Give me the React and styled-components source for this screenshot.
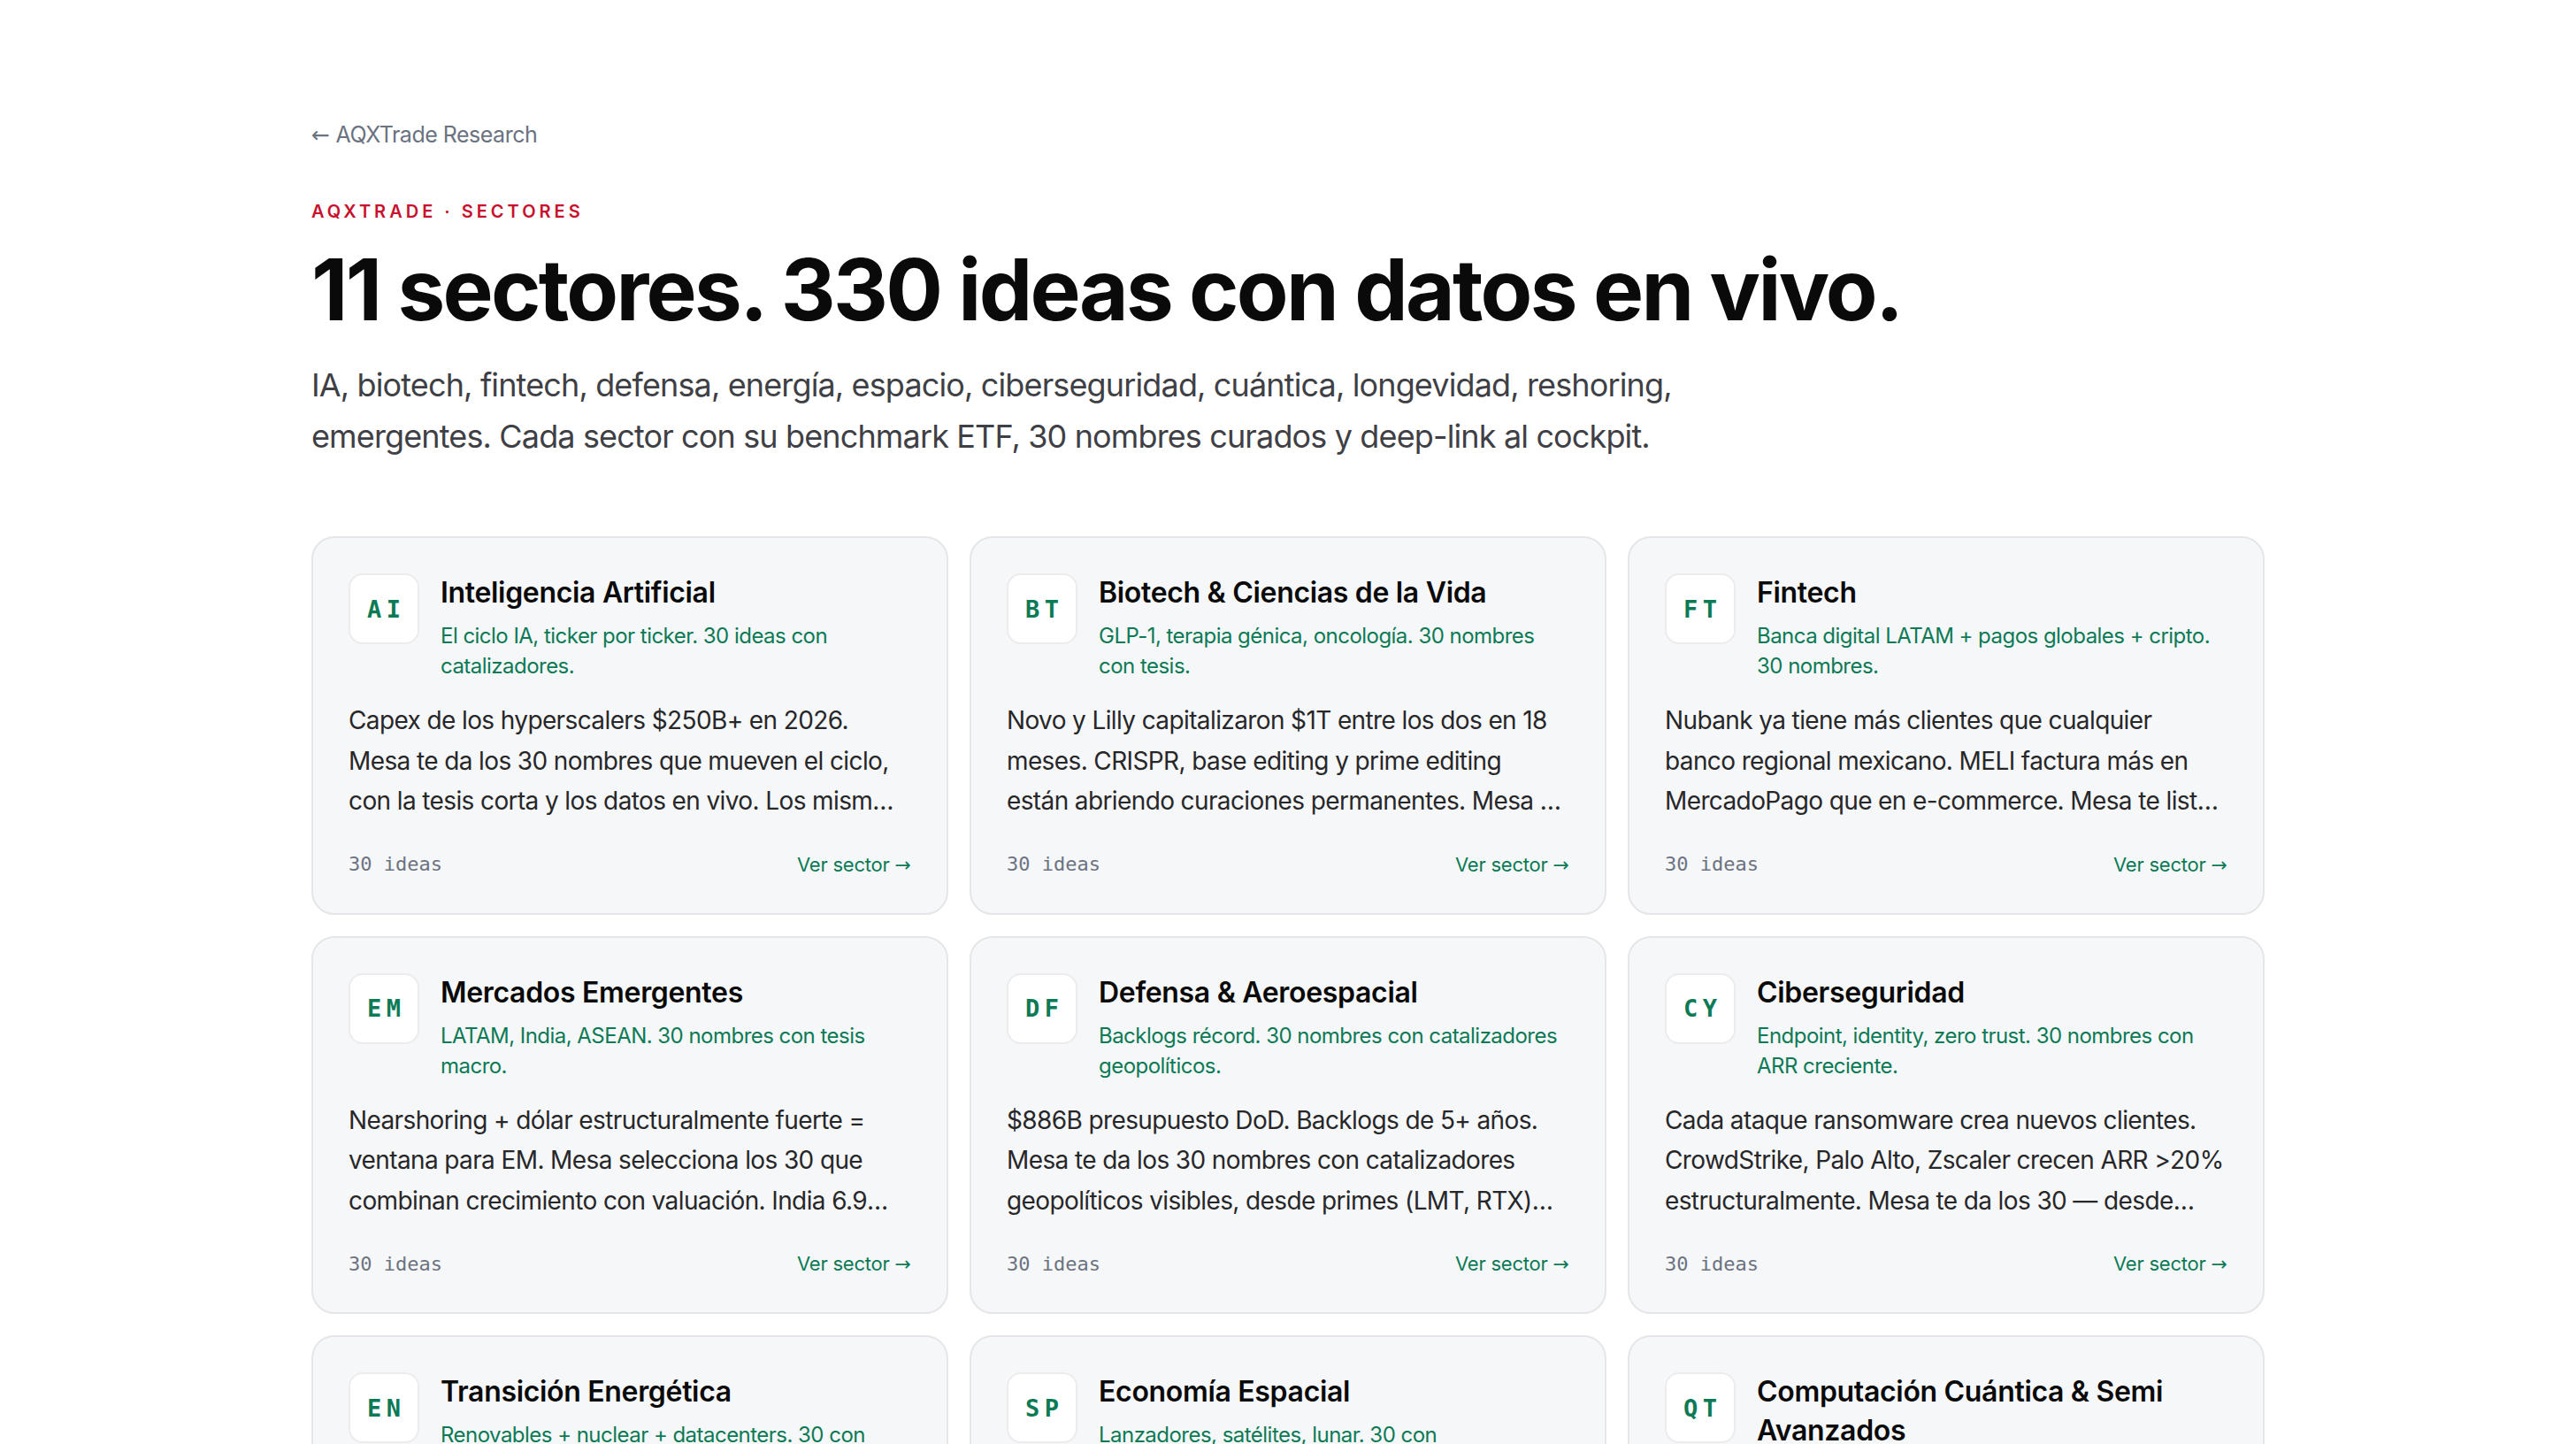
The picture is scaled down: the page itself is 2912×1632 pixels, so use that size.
import React from 'react';
import styled, { createGlobalStyle } from 'styled-components';

const sectors = [
  {
    code: 'AI',
    name: 'Inteligencia Artificial',
    tagline: 'El ciclo IA, ticker por ticker. 30 ideas con catalizadores.',
    thesis:
      'Capex de los hyperscalers $250B+ en 2026. Mesa te da los 30 nombres que mueven el ciclo, con la tesis corta y los datos en vivo. Los mismos que siguen los grandes fondos, sin ruido.',
  },
  {
    code: 'BT',
    name: 'Biotech & Ciencias de la Vida',
    tagline: 'GLP-1, terapia génica, oncología. 30 nombres con tesis.',
    thesis:
      'Novo y Lilly capitalizaron $1T entre los dos en 18 meses. CRISPR, base editing y prime editing están abriendo curaciones permanentes. Mesa te da los 30 nombres con catalizadores clínicos.',
  },
  {
    code: 'FT',
    name: 'Fintech',
    tagline: 'Banca digital LATAM + pagos globales + cripto. 30 nombres.',
    thesis:
      'Nubank ya tiene más clientes que cualquier banco regional mexicano. MELI factura más en MercadoPago que en e-commerce. Mesa te lista los 30 nombres que capturan la migración digital.',
  },
  {
    code: 'EM',
    name: 'Mercados Emergentes',
    tagline: 'LATAM, India, ASEAN. 30 nombres con tesis macro.',
    thesis:
      'Nearshoring + dólar estructuralmente fuerte = ventana para EM. Mesa selecciona los 30 que combinan crecimiento con valuación. India 6.9% de crecimiento, México con récord de inversión extranjera.',
  },
  {
    code: 'DF',
    name: 'Defensa & Aeroespacial',
    tagline: 'Backlogs récord. 30 nombres con catalizadores geopolíticos.',
    thesis:
      '$886B presupuesto DoD. Backlogs de 5+ años. Mesa te da los 30 nombres con catalizadores geopolíticos visibles, desde primes (LMT, RTX) hasta proveedores de drones y munición.',
  },
  {
    code: 'CY',
    name: 'Ciberseguridad',
    tagline: 'Endpoint, identity, zero trust. 30 nombres con ARR creciente.',
    thesis:
      'Cada ataque ransomware crea nuevos clientes. CrowdStrike, Palo Alto, Zscaler crecen ARR >20% estructuralmente. Mesa te da los 30 — desde plataformas consolidadas hasta small caps.',
  },
  {
    code: 'EN',
    name: 'Transición Energética',
    tagline: 'Renovables + nuclear + datacenters. 30 con catalizadores.',
    thesis:
      'La demanda eléctrica de los datacenters se duplica antes de 2030. Nuclear modular, redes y almacenamiento vuelven a ser tesis de crecimiento. Mesa te da los 30 nombres del nuevo ciclo.',
  },
  {
    code: 'SP',
    name: 'Economía Espacial',
    tagline: 'Lanzadores, satélites, lunar. 30 con catalizadores.',
    thesis:
      'El costo por kilo a órbita cayó 90% en una década. Constelaciones, observación terrestre y misiones lunares ya facturan. Mesa te da los 30 nombres que cotizan la nueva carrera espacial.',
  },
  {
    code: 'QT',
    name: 'Computación Cuántica & Semi Avanzados',
    tagline: 'Qubits, litografía, memoria HBM. 30 nombres.',
    thesis:
      'Cada nodo de 2nm exige más litografía EUV y más memoria HBM. La cuántica pasa del laboratorio al primer ingreso recurrente. Mesa te da los 30 nombres de la cadena completa.',
  },
  {
    code: 'LG',
    name: 'Longevidad',
    tagline: 'Senolíticos, diagnóstico, medtech. 30 nombres.',
    thesis:
      'La población mayor de 65 se duplica en 25 años. Diagnóstico temprano, medtech y terapias de envejecimiento capturan ese gasto. Mesa te da los 30 nombres con datos en vivo.',
  },
  {
    code: 'RS',
    name: 'Reshoring',
    tagline: 'Manufactura, automatización, logística. 30 nombres.',
    thesis:
      'CHIPS Act e IRA movieron $400B+ de inversión industrial a Norteamérica. Automatización, construcción y logística capturan el regreso de las fábricas. Mesa te da los 30 nombres.',
  },
];

const GlobalStyle = createGlobalStyle`
  * {
    box-sizing: border-box;
  }

  body {
    margin: 0;
    background: #ffffff;
    font-family: Inter, "Noto Sans", "Liberation Sans", sans-serif;
    color: #0a0a0a;
    -webkit-font-smoothing: antialiased;
  }
`;

const App = () => {
  return (
    <>
      <GlobalStyle />
      <Page>
        <BackLink href="#">
          <Arrow>←</Arrow> AQXTrade Research
        </BackLink>

        <Eyebrow>AQXTrade · Sectores</Eyebrow>
        <Headline>11 sectores. 330 ideas con datos en vivo.</Headline>
        <Lead>
          IA, biotech, fintech, defensa, energía, espacio, ciberseguridad, cuántica,
          longevidad, reshoring, emergentes. Cada sector con su benchmark ETF, 30
          nombres curados y deep-link al cockpit.
        </Lead>

        <Grid>
          {sectors.map((s) => (
            <Card key={s.code} href="#">
              <CardHeader>
                <Badge>{s.code}</Badge>
                <HeaderText>
                  <CardTitle>{s.name}</CardTitle>
                  <Tagline>{s.tagline}</Tagline>
                </HeaderText>
              </CardHeader>

              <Thesis>{s.thesis}</Thesis>

              <CardFooter>
                <Count>30 ideas</Count>
                <MoreLink>
                  Ver sector <Arrow>→</Arrow>
                </MoreLink>
              </CardFooter>
            </Card>
          ))}
        </Grid>
      </Page>
    </>
  );
};

// Styled Components
const Page = styled.main`
  max-width: 2304px;
  margin: 0 auto;
  padding: 132px 48px 160px;
`;

// long thin arrow glyph, as in the back link and card links
const Arrow = styled.span`
  font-family: "DejaVu Sans", "Liberation Sans", sans-serif;
  font-weight: 400;
  letter-spacing: 0;
`;

const BackLink = styled.a`
  display: inline-block;
  font-size: 25px;
  line-height: 40px;
  letter-spacing: -0.02em;
  color: #6b7280;
  text-decoration: none;
`;

const Eyebrow = styled.p`
  margin: 52px 0 0;
  font-size: 20px;
  line-height: 28px;
  font-weight: 600;
  letter-spacing: 0.2em;
  text-transform: uppercase;
  color: #c8102e;
`;

const Headline = styled.h1`
  margin: 24px 0 0;
  font-size: 96px;
  line-height: 100px;
  font-weight: 700;
  letter-spacing: -0.028em;
  color: #0a0a0a;
`;

const Lead = styled.p`
  margin: 30px 0 0;
  max-width: 1560px;
  font-size: 36px;
  line-height: 57.6px;
  color: #3f3f46;
  letter-spacing: -0.024em;
`;

const Grid = styled.section`
  display: grid;
  grid-template-columns: repeat(3, 1fr);
  gap: 24px;
  margin-top: 84px;
`;

const Card = styled.a`
  display: flex;
  flex-direction: column;
  padding: 40px;
  background: #f6f7f9;
  border: 2px solid #e5e6ea;
  border-radius: 26px;
  color: inherit;
  text-decoration: none;
`;

const CardHeader = styled.div`
  display: flex;
  align-items: flex-start;
  gap: 24px;
`;

const Badge = styled.span`
  flex: 0 0 80px;
  height: 80px;
  display: flex;
  align-items: center;
  justify-content: center;
  background: #ffffff;
  border: 2px solid #ececef;
  border-radius: 16px;
  font-family: "DejaVu Sans Mono", "Liberation Mono", monospace;
  font-size: 27px;
  font-weight: 700;
  letter-spacing: 0.2em;
  padding-left: 0.2em;
  color: #0b7a55;
`;

const HeaderText = styled.div`
  display: flex;
  flex-direction: column;
  min-width: 0;
`;

const CardTitle = styled.h2`
  margin: 0;
  font-size: 32px;
  line-height: 44px;
  font-weight: 600;
  letter-spacing: -0.01em;
  color: #0a0a0a;
`;

const Tagline = styled.p`
  margin: 10px 0 0;
  font-size: 24px;
  line-height: 34px;
  letter-spacing: -0.022em;
  color: #0b7a55;
`;

const Thesis = styled.p`
  margin: 22px 4px 0 0;
  font-size: 28px;
  line-height: 45.5px;
  letter-spacing: -0.022em;
  color: #27272a;
  display: -webkit-box;
  -webkit-line-clamp: 3;
  -webkit-box-orient: vertical;
  overflow: hidden;
`;

const CardFooter = styled.div`
  display: flex;
  align-items: center;
  justify-content: space-between;
  margin-top: auto;
  padding-top: 34px;
  line-height: 28px;
`;

const Count = styled.span`
  font-family: "DejaVu Sans Mono", "Liberation Mono", monospace;
  font-size: 22px;
  color: #6b7280;
`;

const MoreLink = styled.span`
  font-size: 22px;
  letter-spacing: -0.01em;
  color: #0b7a55;
`;

export default App;
